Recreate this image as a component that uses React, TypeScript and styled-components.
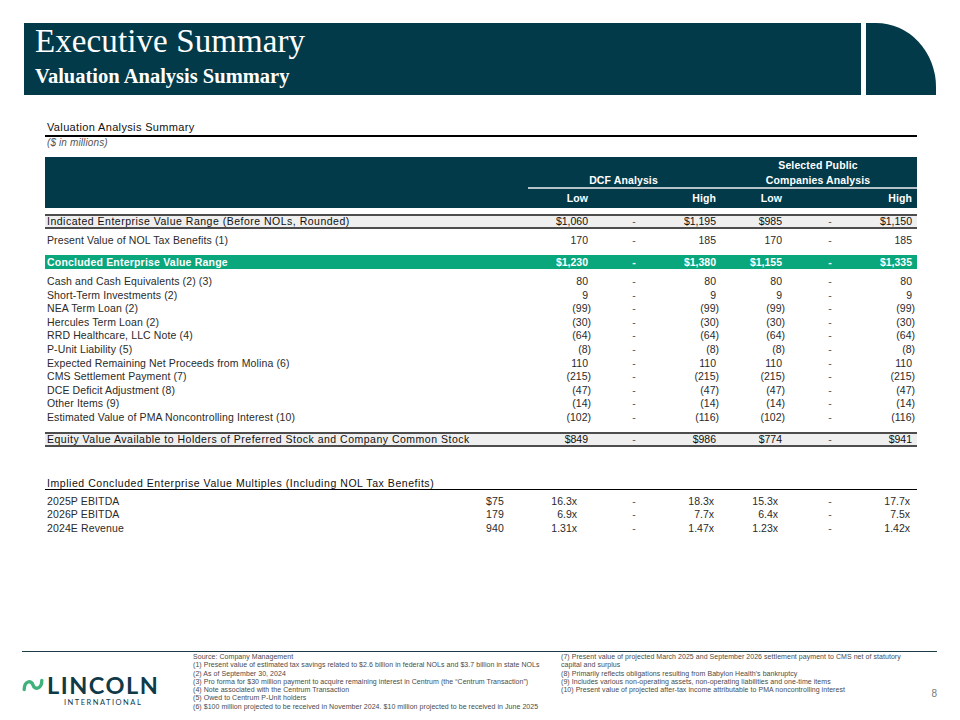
import React from 'react';
import styled, { createGlobalStyle } from 'styled-components';

const GlobalStyle = createGlobalStyle`
  body {
    margin: 0;
    background: #fff;
    font-family: 'Liberation Sans', Arial, sans-serif;
  }
`;

const NAVY = '#033a4a';
const COLS = '483px 63px 86px 42px 66px 90px 42px';
const MULT_COLS = '441px 42px 63px 86px 42px 66px 90px 42px';

const Page = styled.div`
  width: 960px;
  height: 720px;
  display: flex;
  flex-direction: column;
  overflow: hidden;
`;

const Header = styled.header`
  display: flex;
  gap: 5px;
  padding: 23px 0 0 24px;
`;

const TitleBand = styled.div`
  width: 837px;
  height: 72px;
  box-sizing: border-box;
  padding: 0 0 0 11px;
  background: ${NAVY};
  color: #fff;
  font-family: 'Liberation Serif', 'Times New Roman', serif;
`;

const Title = styled.h1`
  margin: 0;
  font-size: 33px;
  font-weight: normal;
  line-height: 37px;
  letter-spacing: 0.1px;
`;

const Subtitle = styled.h2`
  margin: 4px 0 0;
  font-size: 20.5px;
  font-weight: bold;
  line-height: 24px;
`;

const Corner = styled.div`
  width: 70px;
  height: 72px;
  background: ${NAVY};
  border-top-right-radius: 60px 64px;
`;

const Main = styled.main`
  margin-top: 26px;
  padding-left: 45px;
  width: 872px;
  color: #2a2a2a;
  font-size: 10.5px;
  letter-spacing: 0.12px;
`;

const SectionTitle = styled.div`
  padding-left: 2px;
  font-size: 11px;
  line-height: 12px;
  letter-spacing: 0.35px;
  color: #111;
  padding-bottom: 2px;
  border-bottom: 2px solid #000;
`;

const Units = styled.div`
  padding-left: 2px;
  font-style: italic;
  font-size: 10px;
  line-height: 11px;
  color: #555;
`;

const HeadBand = styled.div`
  margin-top: 9px;
  display: grid;
  grid-template-columns: ${COLS};
  grid-template-rows: 15px 17px 19px;
  background: ${NAVY};
  color: #fff;
  font-weight: bold;
`;

const GroupHead = styled.div<{ $col: string; $row: number; $rule?: boolean }>`
  grid-column: ${(p) => p.$col};
  grid-row: ${(p) => p.$row};
  text-align: center;
  line-height: 14px;
  padding-top: 1px;
  ${(p) => (p.$rule ? 'border-bottom: 2px solid #b7c3c8;' : '')}
`;

const SubHead = styled.div<{ $col: number; $last?: boolean }>`
  grid-column: ${(p) => p.$col};
  grid-row: 3;
  text-align: right;
  line-height: 19px;
  padding-right: ${(p) => (p.$last ? 5 : 3)}px;
`;

type Variant = 'total' | 'plain' | 'highlight' | 'item';

const Row = styled.div<{ $variant: Variant }>`
  display: grid;
  grid-template-columns: ${COLS};
  ${(p) =>
    p.$variant === 'total' &&
    `
    background: #efefef;
    border-top: 2px solid #4d4d4d;
    border-bottom: 2px solid #4d4d4d;
    line-height: 11px;
    color: #111;
  `}
  ${(p) =>
    p.$variant === 'plain' &&
    `
    line-height: 12px;
    padding: 5px 0;
    margin-bottom: 4px;
  `}
  ${(p) =>
    p.$variant === 'highlight' &&
    `
    background: #0aa67c;
    color: #fff;
    font-weight: bold;
    line-height: 14px;
    letter-spacing: 0.2px;
  `}
  ${(p) => p.$variant === 'item' && 'line-height: 13.6px;'}
`;

const FirstTotal = styled(Row)`
  margin-top: 6px;
`;

const Items = styled.div`
  padding: 6px 0 7px;
`;

const Label = styled.div<{ $wide?: boolean }>`
  padding-left: 2px;
  white-space: nowrap;
  ${(p) => (p.$wide ? 'letter-spacing: 0.5px;' : '')}
`;

const Num = styled.div<{ $pr: number }>`
  text-align: right;
  white-space: nowrap;
  letter-spacing: 0;
  padding-right: ${(p) => p.$pr}px;
`;

const Dash = styled.div<{ $light?: boolean }>`
  text-align: center;
  color: ${(p) => (p.$light ? '#fff' : '#555')};
`;

const MultTitle = styled.div`
  margin-top: 30px;
  padding-left: 2px;
  font-size: 10.5px;
  line-height: 12px;
  letter-spacing: 0.55px;
  color: #111;
  border-bottom: 1.5px solid #000;
`;

const MultList = styled.div`
  padding-top: 5px;
`;

const MultRow = styled.div`
  display: grid;
  grid-template-columns: ${MULT_COLS};
  line-height: 13.6px;
`;

const Metric = styled.div`
  white-space: nowrap;
`;

const Footer = styled.footer`
  margin: auto 23px 0 22px;
  height: 69px;
  box-sizing: border-box;
  border-top: 1px solid #1d3d4a;
  display: flex;
`;

const Logo = styled.div`
  width: 171px;
  padding-top: 21px;
  display: flex;
  align-items: flex-start;
  gap: 3px;
`;

const Wordmark = styled.div`
  display: flex;
  flex-direction: column;
  align-items: center;
  color: #0f3a48;
  font-family: Lato, 'Open Sans', sans-serif;
`;

const LogoName = styled.div`
  font-size: 23.5px;
  font-weight: 700;
  letter-spacing: 1.5px;
  line-height: 24px;
`;

const LogoSub = styled.div`
  font-size: 7.5px;
  letter-spacing: 1.5px;
  line-height: 9px;
  margin-top: 1px;
`;

const Notes = styled.div<{ $width: number }>`
  width: ${(p) => p.$width}px;
  padding-top: 1px;
  font-size: 7px;
  letter-spacing: 0.05px;
  line-height: 8.3px;
  color: #4a4a4a;
  white-space: nowrap;
`;

const PageNo = styled.div`
  margin-left: auto;
  padding-top: 36px;
  font-size: 10px;
  color: #777;
`;

const indicated = ['$1,060', '$1,195', '$985', '$1,150'];
const nolBenefits = ['170', '185', '170', '185'];
const concluded = ['$1,230', '$1,380', '$1,155', '$1,335'];
const equity = ['$849', '$986', '$774', '$941'];

const items: [string, string[]][] = [
  ['Cash and Cash Equivalents (2) (3)', ['80', '80', '80', '80']],
  ['Short-Term Investments (2)', ['9', '9', '9', '9']],
  ['NEA Term Loan (2)', ['(99)', '(99)', '(99)', '(99)']],
  ['Hercules Term Loan (2)', ['(30)', '(30)', '(30)', '(30)']],
  ['RRD Healthcare, LLC Note (4)', ['(64)', '(64)', '(64)', '(64)']],
  ['P-Unit Liability (5)', ['(8)', '(8)', '(8)', '(8)']],
  ['Expected Remaining Net Proceeds from Molina (6)', ['110', '110', '110', '110']],
  ['CMS Settlement Payment (7)', ['(215)', '(215)', '(215)', '(215)']],
  ['DCE Deficit Adjustment (8)', ['(47)', '(47)', '(47)', '(47)']],
  ['Other Items (9)', ['(14)', '(14)', '(14)', '(14)']],
  ['Estimated Value of PMA Noncontrolling Interest (10)', ['(102)', '(116)', '(102)', '(116)']],
];

const multiples: [string, string, string[]][] = [
  ['2025P EBITDA', '$75', ['16.3x', '18.3x', '15.3x', '17.7x']],
  ['2026P EBITDA', '179', ['6.9x', '7.7x', '6.4x', '7.5x']],
  ['2024E Revenue', '940', ['1.31x', '1.47x', '1.23x', '1.42x']],
];

const leftNotes = [
  'Source: Company Management',
  '(1) Present value of estimated tax savings related to $2.6 billion in federal NOLs and $3.7 billion in state NOLs',
  '(2) As of September 30, 2024',
  '(3) Pro forma for $30 million payment to acquire remaining interest in Centrum (the \u201cCentrum Transaction\u201d)',
  '(4) Note associated with the Centrum Transaction',
  '(5) Owed to Centrum P-Unit holders',
  '(6) $100 million projected to be received in November 2024. $10 million projected to be received in June 2025',
];

const rightNotes = [
  '(7) Present value of projected March 2025 and September 2026 settlement payment to CMS net of statutory',
  'capital and surplus',
  '(8) Primarily reflects obligations resulting from Babylon Health\u2019s bankruptcy',
  '(9) Includes various non-operating assets, non-operating liabilities and one-time items',
  '(10) Present value of projected after-tax income attributable to PMA noncontrolling interest',
];

const pad = (v: string, last: boolean) => (v.endsWith(')') ? 0 : 3) + (last ? 2 : 0);

const Values = ({ values, light }: { values: string[]; light?: boolean }) => (
  <>
    <Num $pr={pad(values[0], false)}>{values[0]}</Num>
    <Dash $light={light}>-</Dash>
    <Num $pr={pad(values[1], false)}>{values[1]}</Num>
    <Num $pr={pad(values[2], false)}>{values[2]}</Num>
    <Dash $light={light}>-</Dash>
    <Num $pr={pad(values[3], true)}>{values[3]}</Num>
  </>
);

const Wave = () => (
  <svg width="22" height="16" viewBox="0 0 22 16" style={{ marginTop: 4 }}>
    <path
      d="M2.2 12.5 C2.2 4 9.5 2.5 11 8 C12.5 13.5 19.8 12 19.8 3.5"
      fill="none"
      stroke="#3db37b"
      strokeWidth="3.4"
      strokeLinecap="round"
    />
  </svg>
);

export default function App() {
  return (
    <Page>
      <GlobalStyle />
      <Header>
        <TitleBand>
          <Title>Executive Summary</Title>
          <Subtitle>Valuation Analysis Summary</Subtitle>
        </TitleBand>
        <Corner />
      </Header>

      <Main>
        <SectionTitle>Valuation Analysis Summary</SectionTitle>
        <Units>($ in millions)</Units>

        <HeadBand>
          <GroupHead $col="5 / 8" $row={1}>Selected Public</GroupHead>
          <GroupHead $col="2 / 5" $row={2} $rule>DCF Analysis</GroupHead>
          <GroupHead $col="5 / 8" $row={2} $rule>Companies Analysis</GroupHead>
          <SubHead $col={2}>Low</SubHead>
          <SubHead $col={4}>High</SubHead>
          <SubHead $col={5}>Low</SubHead>
          <SubHead $col={7} $last>High</SubHead>
        </HeadBand>

        <FirstTotal $variant="total">
          <Label $wide>Indicated Enterprise Value Range (Before NOLs, Rounded)</Label>
          <Values values={indicated} />
        </FirstTotal>
        <Row $variant="plain">
          <Label>Present Value of NOL Tax Benefits (1)</Label>
          <Values values={nolBenefits} />
        </Row>
        <Row $variant="highlight">
          <Label>Concluded Enterprise Value Range</Label>
          <Values values={concluded} light />
        </Row>

        <Items>
          {items.map(([label, values]) => (
            <Row key={label} $variant="item">
              <Label>{label}</Label>
              <Values values={values} />
            </Row>
          ))}
        </Items>

        <Row $variant="total">
          <Label $wide>Equity Value Available to Holders of Preferred Stock and Company Common Stock</Label>
          <Values values={equity} />
        </Row>

        <MultTitle>Implied Concluded Enterprise Value Multiples (Including NOL Tax Benefits)</MultTitle>
        <MultList>
          {multiples.map(([label, metric, values]) => (
            <MultRow key={label}>
              <Label>{label}</Label>
              <Metric>{metric}</Metric>
              <Num $pr={14}>{values[0]}</Num>
              <Dash>-</Dash>
              <Num $pr={5}>{values[1]}</Num>
              <Num $pr={7}>{values[2]}</Num>
              <Dash>-</Dash>
              <Num $pr={7}>{values[3]}</Num>
            </MultRow>
          ))}
        </MultList>
      </Main>

      <Footer>
        <Logo>
          <Wave />
          <Wordmark>
            <LogoName>LINCOLN</LogoName>
            <LogoSub>INTERNATIONAL</LogoSub>
          </Wordmark>
        </Logo>
        <Notes $width={368}>
          {leftNotes.map((n) => (
            <div key={n}>{n}</div>
          ))}
        </Notes>
        <Notes $width={340}>
          {rightNotes.map((n) => (
            <div key={n}>{n}</div>
          ))}
        </Notes>
        <PageNo>8</PageNo>
      </Footer>
    </Page>
  );
}
